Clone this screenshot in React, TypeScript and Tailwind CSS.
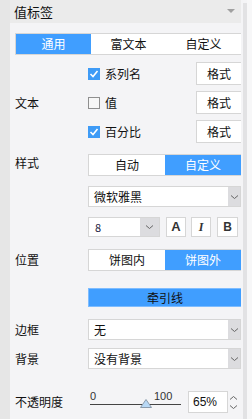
import React from "react";

const font = { fontFamily: '"Noto Sans CJK SC", "Noto Sans", sans-serif' };

function Chevron() {
  return (
    <svg width="9" height="6" viewBox="0 0 9 6" fill="none">
      <path d="M1 1.5 L4.5 4.5 L8 1.5" stroke="#666" strokeWidth="1" />
    </svg>
  );
}

function Check({ checked }: { checked: boolean }) {
  if (checked)
    return (
      <span className="flex h-[12px] w-[12px] items-center justify-center bg-[#3e9bf6]">
        <svg width="10" height="10" viewBox="0 0 10 10" fill="none">
          <path d="M1.5 5 L4 7.5 L8.5 2" stroke="white" strokeWidth="1.6" />
        </svg>
      </span>
    );
  return <span className="h-[12px] w-[12px] border border-[#8f8f8f] bg-[#f7f7f7]" />;
}

function Select({ value, h = "h-[21px]" }: { value: string; h?: string }) {
  return (
    <div className={`flex ${h} w-[153px] border border-[#d6d6d6] bg-white`}>
      <div className="flex flex-1 items-center pl-[5px] text-[12px] text-[#111]">{value}</div>
      <div className="flex w-[12px] items-center justify-center bg-[#dcdcdf]">
        <Chevron />
      </div>
    </div>
  );
}

function CheckRow({ checked, label }: { checked: boolean; label: string }) {
  return (
    <div className="flex h-[23px] items-center">
      <div className="ml-[3px] flex w-[108px] items-center gap-[5px]">
        <Check checked={checked} />
        <span className="text-[12px] text-[#111]">{label}</span>
      </div>
      <div className="flex h-[23px] w-[45px] items-center justify-center border border-r-0 border-[#d6d6d6] bg-white text-[12px] text-[#111]">
        格式
      </div>
    </div>
  );
}

function Seg({ a, b }: { a: string; b: string }) {
  return (
    <div className="flex h-[22px] w-[153px] border border-r-0 border-[#d6d6d6] bg-white text-[12px]">
      <div className="flex w-[76px] items-center justify-center text-[#111]">{a}</div>
      <div className="flex flex-1 items-center justify-center bg-[#409eff] text-white">{b}</div>
    </div>
  );
}

export default function App() {
  return (
    <div className="flex h-[419px] w-[252px] overflow-hidden bg-[#f4f4f6]" style={font}>
      <div className="w-[10px] shrink-0 bg-[#e6e6e6]" />
      <div className="w-[231px] shrink-0 overflow-hidden">
        <div className="flex h-[23px] items-center justify-between bg-[#ebebeb] pl-[4px] pr-[6px]">
          <span className="text-[13px] text-[#111]">值标签</span>
          <svg width="8" height="5" viewBox="0 0 8 5">
            <path d="M0 0 H8 L4 4 Z" fill="#a0a0a0" />
          </svg>
        </div>
        <div className="pl-[5px]">
          <div className="mt-[10px] flex h-[22px] w-[226px] border border-r-0 border-[#d6d6d6] bg-white text-[12px]">
            <div className="flex w-[75px] items-center justify-center bg-[#409eff] text-white">通用</div>
            <div className="flex w-[75px] items-center justify-center text-[#111]">富文本</div>
            <div className="flex flex-1 items-center justify-center text-[#111]">自定义</div>
          </div>

          <div className="mt-[7px] flex">
            <div className="flex w-[73px] items-center text-[12px] text-[#111]">文本</div>
            <div className="flex flex-col gap-[6px]">
              <CheckRow checked label="系列名" />
              <CheckRow checked={false} label="值" />
              <CheckRow checked label="百分比" />
            </div>
          </div>

          <div className="mt-[11px] flex">
            <div className="w-[73px] pt-[1px] text-[12px] leading-[16px] text-[#111]">样式</div>
            <div className="flex flex-col gap-[10px]">
              <Seg a="自动" b="自定义" />
              <Select value="微软雅黑" />
              <div className="flex items-center">
                <div className="flex h-[20px] w-[72px] border border-[#d6d6d6] bg-white">
                  <div className="flex flex-1 items-center pl-[6px] text-[11px] text-[#1a2040]">8</div>
                  <div className="flex w-[19px] items-center justify-center bg-[#dcdcdf]">
                    <Chevron />
                  </div>
                </div>
                <div className="ml-[6px] flex h-[20px] w-[20px] items-center justify-center border border-[#d6d6d6] bg-white text-[13px] font-bold text-[#333]" style={{ fontFamily: '"Liberation Sans", sans-serif' }}>
                  A
                </div>
                <div className="ml-[5px] flex h-[20px] w-[20px] items-center justify-center border border-[#d6d6d6] bg-white text-[12px] font-bold italic text-[#333]" style={{ fontFamily: '"Liberation Serif", serif' }}>
                  I
                </div>
                <div className="ml-[6px] flex h-[20px] w-[21px] items-center justify-center border border-[#d6d6d6] bg-white text-[12px] font-bold text-[#333]" style={{ fontFamily: '"Liberation Sans", sans-serif' }}>
                  B
                </div>
              </div>
            </div>
          </div>

          <div className="mt-[12px] flex items-center">
            <div className="w-[73px] text-[12px] text-[#111]">位置</div>
            <Seg a="饼图内" b="饼图外" />
          </div>

          <div className="mt-[17px] flex">
            <div className="w-[73px]" />
            <div className="flex h-[19px] w-[153px] items-center justify-center border border-r-0 border-[#7dbcff] bg-[#409eff] text-[12px] text-[#111]">
              牵引线
            </div>
          </div>

          <div className="mt-[12px] flex items-center">
            <div className="w-[73px] text-[12px] text-[#111]">边框</div>
            <Select value="无" />
          </div>

          <div className="mt-[8px] flex items-center">
            <div className="w-[73px] text-[12px] text-[#111]">背景</div>
            <Select value="没有背景" />
          </div>

          <div className="mt-[22px] flex items-center">
            <div className="w-[73px] text-[12px] text-[#111]">不透明度</div>
            <div className="relative ml-[2px] h-[22px] w-[92px]">
              <span className="absolute left-[0px] top-[0px] text-[11px] leading-[11px] text-[#333]" style={{ fontFamily: '"Liberation Sans", sans-serif' }}>0</span>
              <span className="absolute left-[64px] top-[0px] text-[11px] leading-[11px] text-[#333]" style={{ fontFamily: '"Liberation Sans", sans-serif' }}>100</span>
              <div className="absolute left-0 top-[13px] h-[1px] w-[91px] bg-[#444]" />
              <svg className="absolute left-[50px] top-[8px]" width="12" height="9" viewBox="0 0 12 9">
                <path d="M6 0.5 L11.5 8.5 H0.5 Z" fill="#b8d8f5" stroke="#8a9aab" strokeWidth="1" />
              </svg>
            </div>
            <div className="ml-[6px] flex h-[22px] w-[40px] items-center border border-[#d6d6d6] bg-white pl-[4px] text-[12px] text-[#111]" style={{ fontFamily: '"Liberation Sans", sans-serif' }}>
              65%
            </div>
            <div className="ml-[1px] flex flex-col items-center gap-[3px]">
              <svg width="9" height="6" viewBox="0 0 9 6" fill="none">
                <path d="M1 4.5 L4.5 1.5 L8 4.5" stroke="#666" strokeWidth="1" />
              </svg>
              <Chevron />
            </div>
          </div>
        </div>
      </div>
      <div className="w-[2px] shrink-0" />
      <div className="mt-[3px] w-[4px] shrink-0 bg-[#e2e2e4]" />
      <div className="flex-1 bg-[#f7f7f8]" />
    </div>
  );
}
